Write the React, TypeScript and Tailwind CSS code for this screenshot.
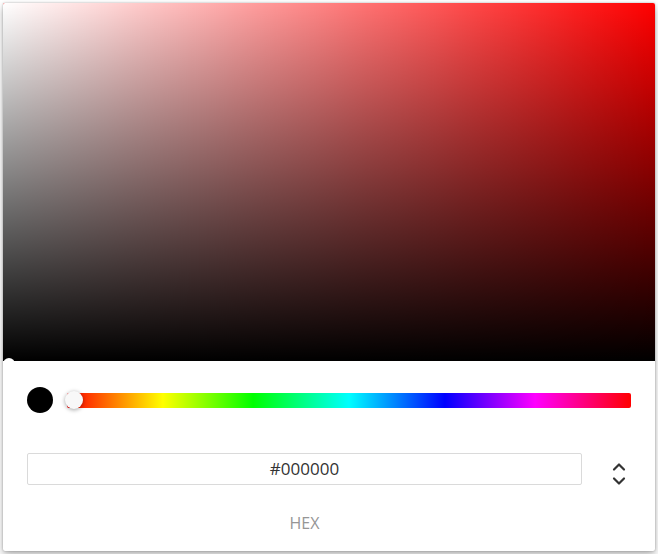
import React from 'react';

const Chevrons: React.FC = () => (
    <svg width="16" height="28" viewBox="0 0 16 28" fill="none" stroke="#333" strokeWidth={2.2} strokeLinecap="round" strokeLinejoin="round">
        <path d="M3 9.5 L8 4.5 L13 9.5" />
        <path d="M3 18.5 L8 23.5 L13 18.5" />
    </svg>
);

export default function App() {
    return (
        <div className="p-[3px] font-['Open_Sans','Liberation_Sans',sans-serif]">
            <div className="w-[652px] bg-white rounded-[2px] shadow-[0_0_2px_rgba(0,0,0,0.3),0_4px_8px_rgba(0,0,0,0.3)]">
                {/* Saturation */}
                <div className="relative h-[358px] rounded-t-[2px] overflow-hidden bg-[#f00]">
                    <div className="absolute inset-0 bg-[linear-gradient(to_right,#fff,rgba(255,255,255,0))]" />
                    <div className="absolute inset-0 bg-[linear-gradient(to_top,#000,rgba(0,0,0,0))]" />
                </div>

                {/* Body */}
                <div className="relative px-6 pt-[25px] pb-[18px]">
                    <div className="absolute -top-[3px] left-[0px] w-[12px] h-[12px] rounded-full bg-white" />

                    <div className="flex items-center h-[28px]">
                        <div className="w-[26px] h-[26px] rounded-full bg-black shrink-0" />
                        <div className="relative ml-[14px] flex-1 h-[15px] rounded-[2px] bg-[linear-gradient(to_right,#f00_0%,#ff0_17%,#0f0_33%,#0ff_50%,#00f_67%,#f0f_83%,#f00_100%)]">
                            <div className="absolute left-[-2px] top-1/2 -translate-y-1/2 w-[18px] h-[18px] rounded-full bg-[#f8f8f8] shadow-[0_1px_4px_rgba(0,0,0,0.37)]" />
                        </div>
                    </div>

                    <div className="flex mt-[39px]">
                        <div className="flex-1 flex flex-col items-center">
                            <div className="w-full h-[32px] border border-[#dadada] rounded-[2px] flex items-center justify-center text-[17px] text-[#333]">
                                #000000
                            </div>
                            <div className="mt-[28px] h-[20px] leading-[20px] text-[16px] text-[#969696] uppercase">HEX</div>
                        </div>
                        <div className="w-[49px] flex justify-start pl-[29px] pt-[7px]">
                            <Chevrons />
                        </div>
                    </div>
                </div>
            </div>
        </div>
    );
}
